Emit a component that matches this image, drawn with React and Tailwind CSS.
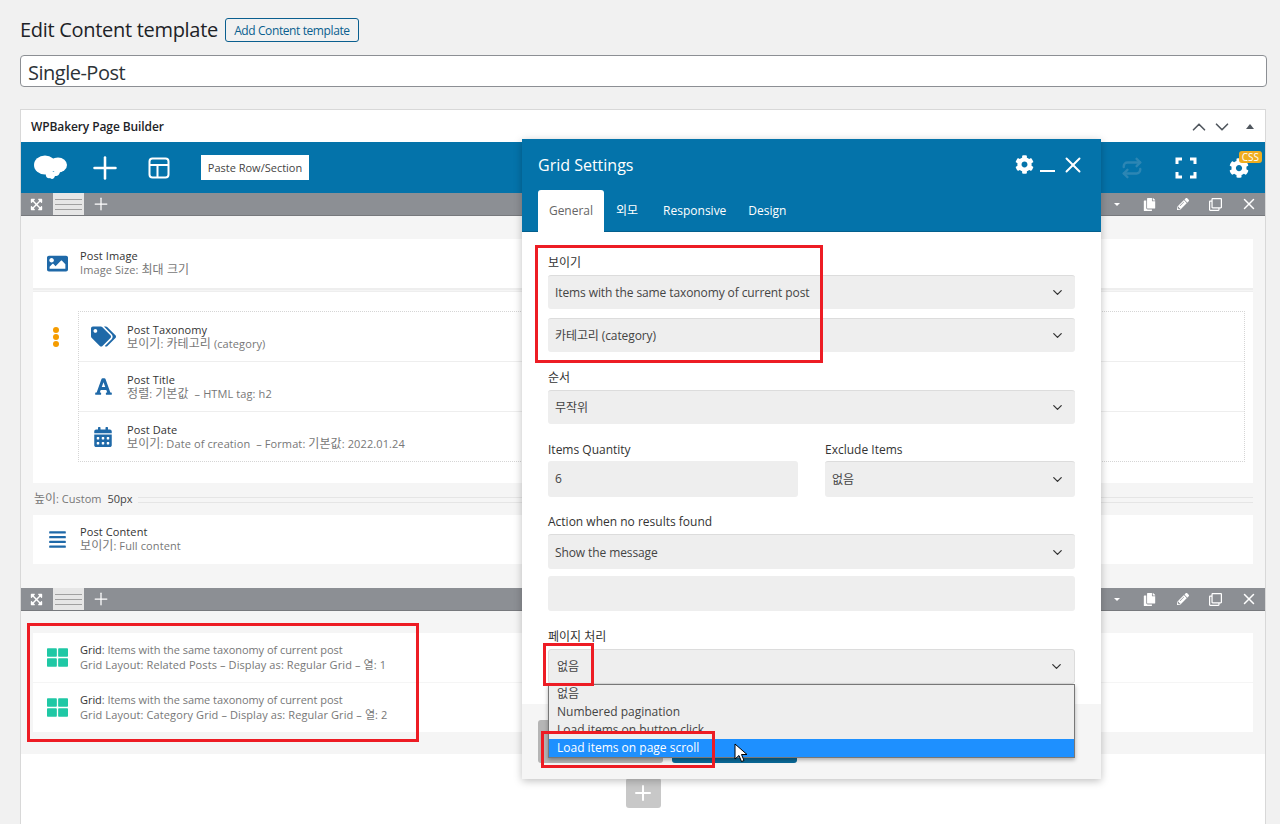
// App.jsx
import { ChevronDown, ChevronUp, Plus, Repeat, X } from "lucide-react";
import {
  FaAlignJustify, FaCalendarAlt, FaCog, FaCopy, FaExpandArrowsAlt,
  FaFont, FaImage, FaPencilAlt, FaRegClone, FaTags, FaThLarge,
} from "react-icons/fa";

const Logo = () => (
  <svg width="34" height="26" viewBox="0 0 34 26" fill="#fff">
    <ellipse cx="11" cy="10" rx="11" ry="9.5" />
    <ellipse cx="24" cy="10" rx="9" ry="7.5" />
    <path d="M12 17h14c-1 4-3 4-5 4-1 3-3 4-5 2-3 1-5-2-4-6z" />
  </svg>
);

const LayoutIcon = () => (
  <svg width="22" height="22" viewBox="0 0 22 22" fill="none" stroke="#fff" strokeWidth="2">
    <rect x="1.5" y="1.5" width="19" height="19" rx="3" />
    <path d="M1.5 8h19M9.5 8v12.5" />
  </svg>
);

const Corners = () => (
  <svg width="22" height="22" viewBox="0 0 22 22" fill="none" stroke="#fff" strokeWidth="3">
    <path d="M2 7V2h5M15 2h5v5M20 15v5h-5M7 20H2v-5" />
  </svg>
);

const Cursor = () => (
  <svg width="14" height="20" viewBox="0 0 14 20">
    <path d="M1 1v15l4-3.5 2.5 6 2.5-1-2.5-6H13z" fill="#fff" stroke="#000" strokeWidth="1" />
  </svg>
);

// Korean runs sit a bit larger than the latin text around them
const K = ({ children }) => <span className="text-xs leading-[14px]">{children}</span>;

function RowBar({ className = "" }) {
  return (
    <div className={`flex h-[23px] items-stretch bg-[#8c8f94] border-b border-[#77797d] ${className}`}>
      <div className="flex w-[31px] items-center justify-center text-white">
        <FaExpandArrowsAlt size={13} />
      </div>
      <div className="ml-px flex w-[31px] flex-col justify-center gap-[4px] bg-[#e6e6e6] px-[2px]">
        <div className="h-px bg-[#a0a0a0]" />
        <div className="h-px bg-[#a0a0a0]" />
        <div className="h-px bg-[#a0a0a0]" />
      </div>
      <div className="ml-[7px] flex items-center text-white">
        <Plus size={20} strokeWidth={1.5} />
      </div>
      <div className="ml-auto flex items-center text-white">
        <div className="flex w-[33px] justify-center">
          <div className="h-0 w-0 border-x-[3px] border-t-[3px] border-x-transparent border-t-white" />
        </div>
        <div className="flex w-[33px] justify-center"><FaCopy size={13} /></div>
        <div className="flex w-[33px] justify-center"><FaPencilAlt size={12} /></div>
        <div className="flex w-[33px] justify-center"><FaRegClone size={13} /></div>
        <div className="flex w-[33px] justify-center"><X size={18} strokeWidth={2} /></div>
      </div>
    </div>
  );
}

function Element({ icon, title, sub, inner, wide }) {
  return (
    <div className={`flex items-center bg-white ${inner ? "h-[49px] pl-[11px]" : "h-[49px] pl-3"}`}>
      <div className={`flex justify-center text-[#1f69a8] shrink-0 ${inner ? "w-[26px]" : "w-[24px]"}`}>{icon}</div>
      <div className={`ml-[11px] whitespace-pre text-[11px] tracking-[0.1px] leading-[14px] ${!inner && !wide ? "pb-[2px]" : ""}`}>
        <div className={`h-[14px] text-[#333] ${wide ? "mb-px" : ""}`}>{title}</div>
        <div className="h-[14px] text-[#777]">{sub}</div>
      </div>
    </div>
  );
}

function Select({ children, className = "", h = "h-[34px]" }) {
  return (
    <div className={`flex items-center justify-between rounded-[3px] border-t border-[#dcdcdc] bg-[#eeeeee] pl-[7px] pr-[10px] text-xs tracking-[-0.1px] text-[#444] ${h} ${className}`}>
      <span className="pt-px">{children}</span>
      <ChevronDown size={15} strokeWidth={2} className="text-[#333]" />
    </div>
  );
}

const Label = ({ children, className = "" }) => (
  <div className={`text-xs leading-4 text-[#333] ${className}`}>{children}</div>
);

function GridSettings() {
  return (
    <div className="absolute left-[522px] top-[139px] flex h-[640px] w-[579px] flex-col bg-white shadow-[0_2px_8px_rgba(0,0,0,0.25)]">
      <div className="h-[93px] shrink-0 bg-[#0473aa] border-b border-[#035f8d]">
        <div className="flex h-[51px] items-center pl-4 pr-[15px] text-white">
          <span className="text-base">Grid Settings</span>
          <FaCog size={19} className="ml-auto" />
          <div className="ml-[6px] mt-3 h-[2px] w-[15px] bg-white" />
          <X size={26} strokeWidth={1.8} className="ml-[5px]" />
        </div>
        <div className="flex pl-4 text-xs leading-[42px] text-white">
          <div className="h-[42px] w-[66px] rounded-t-[3px] bg-white text-center text-[#666]">General</div>
          <div className="ml-3">외모</div>
          <div className="ml-[25px]">Responsive</div>
          <div className="ml-[22px]">Design</div>
        </div>
      </div>

      <div className="flex-1 px-[26px] pt-[21px]">
        <Label className="mb-[4px] mt-[2px]">보이기</Label>
        <Select>Items with the same taxonomy of current post</Select>
        <Select className="mt-[9px]">카테고리 (category)</Select>
        <Label className="mb-[4px] mt-[18px]">순서</Label>
        <Select>무작위</Select>
        <div className="mt-[18px] flex gap-[27px]">
          <div className="w-[250px]">
            <Label className="mb-[3px]">Items Quantity</Label>
            <div className="flex h-[36px] items-center rounded-[3px] bg-[#eeeeee] pl-[7px] text-xs text-[#444]">6</div>
          </div>
          <div className="flex-1">
            <Label className="mb-[3px]">Exclude Items</Label>
            <Select h="h-[36px]">없음</Select>
          </div>
        </div>
        <Label className="mb-[4px] mt-[17px]">Action when no results found</Label>
        <Select h="h-[35px]">Show the message</Select>
        <div className="mt-[7px] h-[35px] rounded-[3px] bg-[#eeeeee]" />
        <Label className="mb-[4px] mt-[18px]">페이지 처리</Label>
        <div className="relative">
          <Select h="h-[35px]" className="border border-[#1f5f8b] pl-[8px]">없음</Select>
          <div className="absolute left-0 right-0 top-[35px] border border-[#777] bg-[#eeeeee] text-xs leading-[18px] text-[#444] shadow-[0_2px_4px_rgba(0,0,0,0.3)]">
            <div className="h-[18px] pl-2">없음</div>
            <div className="h-[18px] pl-2">Numbered pagination</div>
            <div className="h-[18px] pl-2">Load items on button click</div>
            <div className="h-[18px] bg-[#1e90ff] pl-2 text-white">Load items on page scroll</div>
          </div>
        </div>
      </div>

      <div className="flex h-[75px] shrink-0 gap-[9px] bg-[#f5f5f5] pl-4 pt-4">
        <div className="h-[43px] w-[125px] rounded-[3px] bg-[#b5b5b5]" />
        <div className="h-[43px] w-[125px] rounded-[3px] bg-[#0a6a99]" />
      </div>
    </div>
  );
}

export default function App() {
  const gridTitle = (
    <span className="tracking-[-0.05px]">Grid<span className="text-[#777]">: Items with the same taxonomy of current post</span></span>
  );

  return (
    <div className="relative h-[824px] overflow-hidden bg-[#f1f1f1] pl-5 pr-[13px] font-['Open_Sans','Noto_Sans_CJK_KR',sans-serif]">
      <div className="flex items-center pt-[18px]">
        <h1 className="text-xl leading-6 tracking-[-0.3px] text-[#1d2327]">Edit Content template</h1>
        <button className="ml-[7px] h-6 w-[134px] rounded-[3px] border border-[#0a5f8f] pt-px text-xs tracking-[-0.4px] text-[#0a5f8f]">
          Add Content template
        </button>
      </div>
      <div className="mt-[13px] flex h-8 items-center rounded-[4px] border border-[#8c8f94] bg-white px-[7px] pt-1 text-xl tracking-[-0.5px] text-[#2c3338]">
        Single-Post
      </div>

      <div className="mr-px mt-[22px] border border-[#d8d8d8] border-b-0 bg-white">
        <div className="flex h-8 items-center pl-[10px] pr-[11px] pt-px text-xs font-semibold tracking-[-0.1px] text-[#1d2327]">
          WPBakery Page Builder
          <ChevronUp size={22} strokeWidth={1.8} className="ml-auto text-[#50575e]" />
          <ChevronDown size={22} strokeWidth={1.8} className="ml-px text-[#50575e]" />
          <div className="ml-[13px] h-0 w-0 border-x-[4px] border-b-[5px] border-x-transparent border-b-[#50575e]" />
        </div>

        <div className="flex h-[51px] items-center bg-[#0473aa] pl-[13px] pr-[16px] text-white">
          <Logo />
          <Plus size={36} strokeWidth={1.7} className="ml-[19px]" />
          <div className="ml-[25px]"><LayoutIcon /></div>
          <div className="ml-[31px] flex h-[25px] w-[108px] items-center justify-center bg-white pt-px text-[11px] text-[#444]">
            Paste Row/Section
          </div>
          <Repeat size={22} strokeWidth={2.6} className="ml-auto text-[#2c86b4]" />
          <div className="ml-[32px]"><Corners /></div>
          <div className="relative ml-[32px]">
            <FaCog size={20} />
            <div className="absolute -right-[13px] -top-[7px] rounded-[3px] bg-[#f0ad1e] px-[3px] text-[10px] leading-[12px]">CSS</div>
          </div>
        </div>

        <div className="bg-[#f5f5f5] pb-[22px]">
          <RowBar />
          <div className="px-3 pt-[23px]">
            <div className="border-b-2 border-[#eeeeee]">
              <Element icon={<FaImage size={21} />} title="Post Image" sub={<>Image Size: <K>최대 크기</K></>} />
            </div>
            <div className="mt-[1px] flex h-[192px] bg-white pl-[45px] pr-2 pt-[19px] border-t border-[#eeeeee]">
              <div className="relative h-[151px] flex-1 border border-dotted border-[#d5d5d5]">
                <div className="absolute -left-[26px] top-[15px] flex flex-col gap-px">
                  <div className="h-[6px] w-[6px] rounded-full bg-[#f59c00]" />
                  <div className="h-[6px] w-[6px] rounded-full bg-[#f59c00]" />
                  <div className="h-[6px] w-[6px] rounded-full bg-[#f59c00]" />
                </div>
                <div className="border-b border-[#eeeeee]">
                  <Element inner icon={<FaTags size={25} />} title="Post Taxonomy" sub={<><K>보이기</K>: <K>카테고리</K> (category)</>} />
                </div>
                <div className="border-b border-[#eeeeee]">
                  <Element inner icon={<FaFont size={19} />} title="Post Title" sub={<><K>정렬</K>: <K>기본값</K>  – HTML tag: h2</>} />
                </div>
                <Element inner icon={<FaCalendarAlt size={20} />} title="Post Date" sub={<><K>보이기</K>: Date of creation  – Format: <K>기본값</K>: 2022.01.24</>} />
              </div>
            </div>
            <div className="flex h-8 items-center pt-px text-[11px] text-[#777]">
              <span className="ml-px"><K>높이</K>: Custom</span>
              <span className="ml-[6px] text-[#444]">50px</span>
              <div className="ml-[5px] h-[6px] flex-1 border-y border-[#e5e5e5]" />
            </div>
            <Element icon={<FaAlignJustify size={19} />} title="Post Content" sub={<><K>보이기</K>: Full content</>} />
          </div>
          <RowBar className="mt-6" />
          <div className="px-3 pt-[22px]">
            <Element
              wide
              icon={<FaThLarge size={21} className="text-[#1fc8a5]" />}
              title={gridTitle}
              sub="Grid Layout: Related Posts – Display as: Regular Grid – 열: 1"
            />
            <div className="mt-px">
              <Element
                wide
                icon={<FaThLarge size={21} className="text-[#1fc8a5]" />}
                title={gridTitle}
                sub="Grid Layout: Category Grid – Display as: Regular Grid – 열: 2"
              />
            </div>
          </div>
        </div>

        <div className="flex h-[80px] justify-center pt-[24px]">
          <div className="flex h-[30px] w-[35px] items-center justify-center rounded-[3px] bg-[#c8c8c8] text-white">
            <Plus size={24} strokeWidth={2} />
          </div>
        </div>
      </div>

      <GridSettings />

      {/* red annotation boxes */}
      <div className="absolute left-[27px] top-[623px] h-[119px] w-[392px] border-[3px] border-[#ed1c24]" />
      <div className="absolute left-[535px] top-[245px] h-[118px] w-[288px] border-[3px] border-[#ed1c24]" />
      <div className="absolute left-[543px] top-[643px] h-[43px] w-[51px] border-[3px] border-[#ed1c24]" />
      <div className="absolute left-[541px] top-[731px] h-[37px] w-[174px] border-[3px] border-[#ed1c24]" />
      <div className="absolute left-[734px] top-[743px]"><Cursor /></div>
    </div>
  );
}
